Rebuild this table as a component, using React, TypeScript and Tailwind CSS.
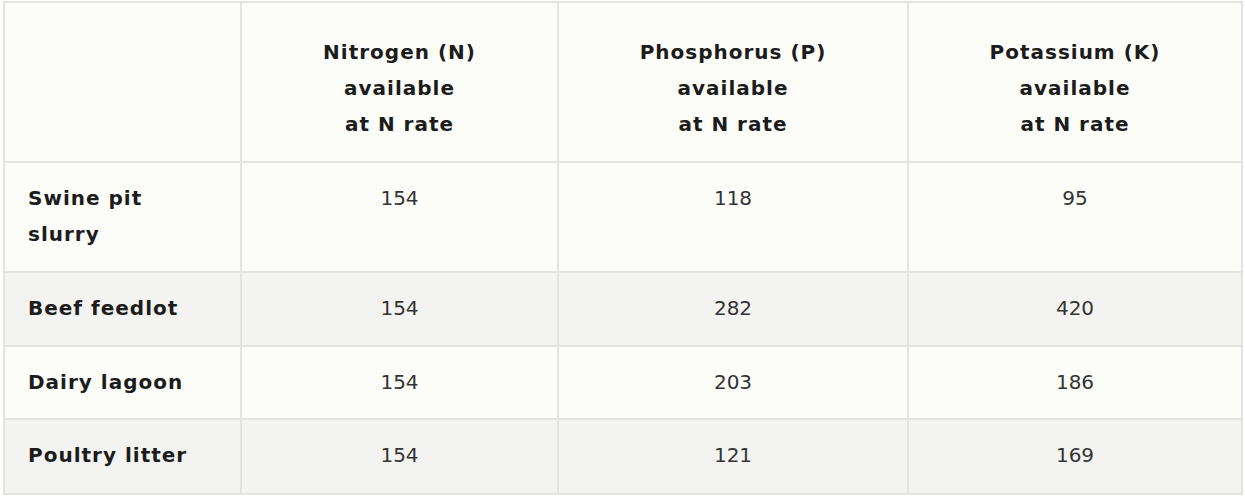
import React from "react";

const rows = [
  { name: ["Swine pit", "slurry"], n: "154", p: "118", k: "95", shade: false, h: "h-[110px]" },
  { name: ["Beef feedlot"], n: "154", p: "282", k: "420", shade: true, h: "h-[74px]" },
  { name: ["Dairy lagoon"], n: "154", p: "203", k: "186", shade: false, h: "h-[73px]" },
  { name: ["Poultry litter"], n: "154", p: "121", k: "169", shade: true, h: "h-[75px]" },
];

export default function App() {
  return (
    <div className="w-[1245px] h-[500px] bg-white pt-[1px] pl-[3px]" style={{ fontFamily: '"DejaVu Sans", sans-serif' }}>
      <table className="border-collapse w-[1238px] table-fixed text-[20px] leading-[36px]">
        <colgroup>
          <col className="w-[237px]" />
          <col className="w-[317px]" />
          <col className="w-[350px]" />
          <col className="w-[334px]" />
        </colgroup>
        <thead>
          <tr className="bg-[#fcfcf9] h-[160px]">
            <th className="border-2 border-[#e3e3e0]"></th>
            {[
              "Nitrogen (N)",
              "Phosphorus (P)",
              "Potassium (K)",
            ].map((t) => (
              <th key={t} className="border-2 border-[#e3e3e0] font-semibold tracking-[1px] text-[#1c1c1c] text-center align-top pt-[31px]">
                <div>{t}</div>
                <div>available</div>
                <div>at N rate</div>
              </th>
            ))}
          </tr>
        </thead>
        <tbody>
          {rows.map((r) => (
            <tr key={r.name.join(" ")} className={`${r.shade ? "bg-[#f3f3f1]" : "bg-[#fcfcf9]"} ${r.h}`}>
              <td className="border-2 border-[#e3e3e0] align-top pt-[17px] pl-[23px] font-semibold tracking-[1px] text-[#1c1c1c]">
                {r.name.map((l) => (
                  <div key={l}>{l}</div>
                ))}
              </td>
              <td className="border-2 border-[#e3e3e0] align-top pt-[17px] text-center text-[#333]">{r.n}</td>
              <td className="border-2 border-[#e3e3e0] align-top pt-[17px] text-center text-[#333]">{r.p}</td>
              <td className="border-2 border-[#e3e3e0] align-top pt-[17px] text-center text-[#333]">{r.k}</td>
            </tr>
          ))}
        </tbody>
      </table>
    </div>
  );
}
